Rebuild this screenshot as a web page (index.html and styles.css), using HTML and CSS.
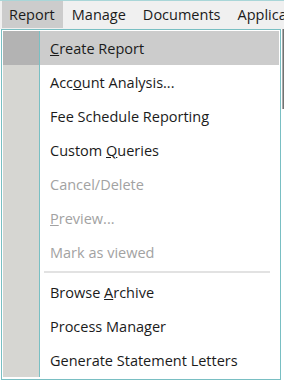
FILE: index.html
```html
<!DOCTYPE html>
<html lang="en">
<head>
  <meta charset="utf-8">
  <title>Report menu</title>
  <link rel="stylesheet" href="styles.css">
</head>
<body>
  <div class="menubar">
    <div class="menubar-item active">Report</div>
    <div class="menubar-item">Manage</div>
    <div class="menubar-item">Documents</div>
    <div class="menubar-item">Applications</div>
  </div>

  <div class="edge-shadow"></div>

  <div class="dropdown">
    <div class="menu-item hover"><span class="gutter"></span><span class="label"><u>C</u>reate Report</span></div>
    <div class="menu-item"><span class="gutter"></span><span class="label">Acc<u>o</u>unt Analysis...</span></div>
    <div class="menu-item"><span class="gutter"></span><span class="label">Fee Schedule Reporting</span></div>
    <div class="menu-item"><span class="gutter"></span><span class="label">Custom <u>Q</u>ueries</span></div>
    <div class="menu-item disabled"><span class="gutter"></span><span class="label">Cancel/Delete</span></div>
    <div class="menu-item disabled"><span class="gutter"></span><span class="label"><u>P</u>review...</span></div>
    <div class="menu-item disabled"><span class="gutter"></span><span class="label">Mark as viewed</span></div>
    <div class="menu-sep"><span class="gutter"></span><span class="sep-line"></span></div>
    <div class="menu-item"><span class="gutter"></span><span class="label">Browse <u>A</u>rchive</span></div>
    <div class="menu-item"><span class="gutter"></span><span class="label">Process Manager</span></div>
    <div class="menu-item"><span class="gutter"></span><span class="label">Generate Statement Letters</span></div>
  </div>
</body>
</html>
```

FILE: styles.css
```css
body {
  margin: 0;
  background: #fff;
  font-family: "Open Sans", "Noto Sans", sans-serif;
  font-size: 14.5px;
  color: #1b1b1b;
  width: 284px;
  height: 388px;
  overflow: hidden;
  position: relative;
}

.menubar {
  display: flex;
  height: 29px;
  background: #f0f0f0;
  border-top: 1px solid #a9d6d8;
  box-sizing: border-box;
  padding-left: 2px;
  white-space: nowrap;
  overflow: hidden;
}

.menubar-item {
  padding: 0 8px 0 7px;
  height: 27px;
  line-height: 27px;
  flex: none;
}

.menubar-item + .menubar-item {
  padding-left: 9px;
}

.menubar-item.active {
  background: #cccccc;
}

/* strip of the window underneath, seen past the dropdown */
.edge-shadow {
  position: absolute;
  right: 0;
  top: 29px;
  width: 2px;
  height: 80px;
  background: linear-gradient(to right, #c8c8c8, #555);
}

.dropdown {
  margin-left: 1px;
  width: 280px;
  box-sizing: border-box;
  border: 1px solid #79bfc3;
  padding: 1px 1px 2px;
  background: #fff;
}

.menu-item,
.menu-sep {
  display: flex;
  align-items: center;
}

.menu-item {
  height: 34px;
}

.gutter {
  align-self: stretch;
  width: 36px;
  flex: none;
  background: #d6d6d2;
  border-right: 1px solid #79bfc3;
}

.label {
  padding-left: 10px;
  white-space: nowrap;
}

.menu-item.hover {
  background: #cccccc;
}

.menu-item.hover .gutter {
  background: #b3b3b3;
}

.menu-item.disabled {
  color: #a2a2a2;
}

.menu-sep {
  height: 6px;
}

.sep-line {
  margin-left: 4px;
  width: 226px;
  height: 2px;
  background: #e2e2e2;
}
```
